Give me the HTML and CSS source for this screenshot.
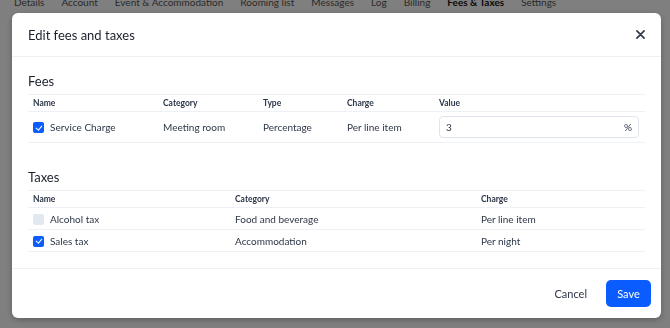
FILE: index.html
```html
<!DOCTYPE html>
<html lang="en">
<head>
  <meta charset="UTF-8" />
  <title>Edit fees and taxes</title>
  <link rel="stylesheet" href="styles.css">
</head>
<body>
  <nav class="tabs">
    <span>Details</span>
    <span>Account</span>
    <span>Event &amp; Accommodation</span>
    <span>Rooming list</span>
    <span>Messages</span>
    <span>Log</span>
    <span>Billing</span>
    <span class="active">Fees &amp; Taxes</span>
    <span>Settings</span>
  </nav>

  <div class="backdrop"></div>

  <div class="modal">
    <div class="modal-header">
      <h2>Edit fees and taxes</h2>
      <button class="close" aria-label="Close">
        <svg width="9" height="9" viewBox="0 0 10 10"><path d="M1 1L9 9M9 1L1 9" stroke="#2d3748" stroke-width="1.8" stroke-linecap="round"/></svg>
      </button>
    </div>

    <div class="modal-body">
      <h3>Fees</h3>
      <table class="grid fees">
        <thead>
          <tr>
            <th class="c1">Name</th>
            <th class="c2">Category</th>
            <th class="c3">Type</th>
            <th class="c4">Charge</th>
            <th>Value</th>
          </tr>
        </thead>
        <tbody>
          <tr>
            <td><span class="check on"></span>Service Charge</td>
            <td>Meeting room</td>
            <td>Percentage</td>
            <td>Per line item</td>
            <td><div class="field"><span>3</span><span>%</span></div></td>
          </tr>
        </tbody>
      </table>

      <h3 class="taxes-title">Taxes</h3>
      <table class="grid taxes">
        <thead>
          <tr>
            <th class="t1">Name</th>
            <th class="t2">Category</th>
            <th>Charge</th>
          </tr>
        </thead>
        <tbody>
          <tr>
            <td><span class="check"></span>Alcohol tax</td>
            <td>Food and beverage</td>
            <td>Per line item</td>
          </tr>
          <tr>
            <td><span class="check on"></span>Sales tax</td>
            <td>Accommodation</td>
            <td>Per night</td>
          </tr>
        </tbody>
      </table>
    </div>

    <div class="modal-footer">
      <button class="btn-link">Cancel</button>
      <button class="btn-primary">Save</button>
    </div>
  </div>
</body>
</html>
```

FILE: styles.css
```css
:root {
  --blue: #0a5cff;
  --text: #2d3748;
  --line: #edf0f5;
}

body {
  margin: 0;
  background: #fff;
  font-family: Lato, 'Noto Sans', sans-serif;
  color: var(--text);
}

.tabs {
  display: flex;
  gap: 17px;
  padding-left: 14px;
  margin-top: -4px;
  font-size: 10px;
  line-height: 12px;
  color: #555;
}

.tabs .active {
  color: #111;
  font-weight: 700;
}

.backdrop {
  position: fixed;
  inset: 0;
  background: rgba(0, 0, 0, 0.5);
}

.modal {
  position: fixed;
  left: 12px;
  top: 13px;
  width: 649px;
  height: 305px;
  background: #fff;
  border-radius: 6px;
  display: flex;
  flex-direction: column;
  box-shadow: 0 2px 6px rgba(0, 0, 0, 0.25);
}

.modal-header {
  height: 43px;
  display: flex;
  align-items: center;
  justify-content: space-between;
  padding: 0 16px;
  border-bottom: 1px solid var(--line);
}

.modal-header h2 {
  margin: 0;
  font-size: 13px;
  font-weight: 400;
  color: #1a202c;
}

.close {
  background: none;
  border: none;
  padding: 0;
  display: flex;
  cursor: pointer;
}

.modal-body {
  padding: 15px 16px 16px;
  border-bottom: 1px solid var(--line);
}

h3 {
  margin: 0 0 4px;
  font-size: 13px;
  font-weight: 400;
  line-height: 18px;
  color: #1a202c;
}

.taxes-title {
  margin-top: 25px;
}

.grid {
  width: 100%;
  border-collapse: collapse;
  table-layout: fixed;
  font-size: 10px;
}

.grid th {
  text-align: left;
  font-size: 8.5px;
  font-weight: 700;
  height: 16px;
  padding: 0 5px;
  border-top: 1px solid var(--line);
  border-bottom: 1px solid var(--line);
}

.grid td {
  padding: 0 5px;
  border-bottom: 1px solid var(--line);
  white-space: nowrap;
}

.fees td {
  height: 30px;
}

.taxes td {
  height: 21px;
}

.c1 { width: 120px; }
.c2 { width: 90px; }
.c3 { width: 74px; }
.c4 { width: 82px; }
.t1 { width: 192px; }
.t2 { width: 236px; }

.check {
  display: inline-block;
  width: 11px;
  height: 11px;
  border-radius: 2px;
  background: #e2e8f0;
  vertical-align: -2px;
  margin-right: 6px;
  position: relative;
}

.check.on {
  background: var(--blue);
}

.check.on::after {
  content: "";
  position: absolute;
  left: 3.5px;
  top: 1.5px;
  width: 2.5px;
  height: 5px;
  border: solid #fff;
  border-width: 0 1.5px 1.5px 0;
  transform: rotate(40deg);
}

.field {
  display: flex;
  justify-content: space-between;
  align-items: center;
  height: 20px;
  margin-right: 1px;
  padding: 0 6px;
  border: 1px solid #dfe4ec;
  border-radius: 4px;
}

.modal-footer {
  flex: 1;
  display: flex;
  justify-content: flex-end;
  align-items: center;
  gap: 19px;
  padding: 0 10px;
}

.btn-link {
  background: none;
  border: none;
  font: inherit;
  font-size: 11px;
  color: var(--text);
  padding: 0;
  cursor: pointer;
}

.btn-primary {
  background: var(--blue);
  color: #fff;
  border: none;
  border-radius: 5px;
  font: inherit;
  font-size: 11px;
  width: 45px;
  height: 27px;
  cursor: pointer;
}
```
